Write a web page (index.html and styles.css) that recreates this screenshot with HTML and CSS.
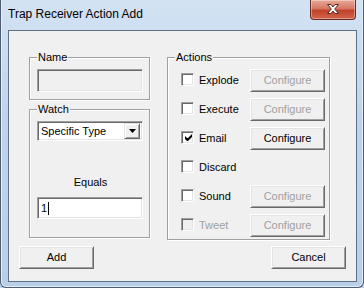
FILE: index.html
```html
<!doctype html>
<html lang="en">
	<head>
		<meta charset="UTF-8">
		<title>Trap Receiver Action Add</title>
		<link rel="stylesheet" href="styles.css">
	</head>
	<body>
		<div class="window">
			<div class="titlebar">
				<span class="title">Trap Receiver Action Add</span>
				<div class="close">
					<svg width="46" height="20" viewBox="0 0 46 20">
						<path d="M17.5 5.5h3.5l2 2.5 2-2.5h3.5l-3.8 4.5 3.8 4.5h-3.5l-2-2.5-2 2.5h-3.5l3.8-4.5z" fill="#fff" stroke="#5a2a22" stroke-width="1"/>
					</svg>
				</div>
			</div>
			<div class="client">
				<div class="panes">
					<div class="col-left">
						<div class="group group-name">
							<span class="legend">Name</span>
							<div class="field field-off"></div>
						</div>
						<div class="group group-watch">
							<span class="legend">Watch</span>
							<div class="select">
								<span class="select-text">Specific Type</span>
								<span class="drop">
									<svg width="7" height="4" viewBox="0 0 7 4"><path d="M0 0h7l-3.5 4z" fill="#000"/></svg>
								</span>
							</div>
							<div class="equals">Equals</div>
							<div class="field"><span>1</span><span class="caret"></span></div>
						</div>
					</div>
					<div class="group group-actions">
						<span class="legend">Actions</span>
						<div class="rows">
							<label class="row">
								<span class="check"></span><span class="lbl">Explode</span>
								<span class="btn btn-off">Configure</span>
							</label>
							<label class="row">
								<span class="check"></span><span class="lbl">Execute</span>
								<span class="btn btn-off">Configure</span>
							</label>
							<label class="row">
								<span class="check">
									<svg width="7" height="7" viewBox="0 0 7 7"><path d="M0 2v3l2 2h1l4-4v-3l-4 4h-1z" fill="#000"/></svg>
								</span><span class="lbl">Email</span>
								<span class="btn">Configure</span>
							</label>
							<label class="row">
								<span class="check"></span><span class="lbl">Discard</span>
							</label>
							<label class="row">
								<span class="check"></span><span class="lbl">Sound</span>
								<span class="btn btn-off">Configure</span>
							</label>
							<label class="row row-off">
								<span class="check"></span><span class="lbl">Tweet</span>
								<span class="btn btn-off">Configure</span>
							</label>
						</div>
					</div>
				</div>
				<div class="footer">
					<span class="btn">Add</span>
					<span class="btn">Cancel</span>
				</div>
			</div>
		</div>
	</body>
</html>
```

FILE: styles.css
```css
*{margin:0;padding:0;box-sizing:border-box;}
body{
	font-family:"Liberation Sans",Arial,sans-serif;
	font-size:11px;
	color:#000;
	background:#bcd2ea;
}
.window{
	width:364px;height:288px;
	display:flex;
	flex-direction:column;
	background:linear-gradient(#d3e3f4,#bfd4ec 40%,#b9cfe8);
	border:1px solid #4e5d70;
	border-top:0;
	border-radius:0 0 6px 6px;
	box-shadow:inset 1px 0 #e4eefa,inset -1px 0 #e4eefa,inset 0 -1px #e4eefa;
}
.titlebar{
	height:30px;
	display:flex;
	align-items:flex-start;
	padding-left:7px;
}
.title{
	font-size:12px;
	line-height:14px;
	margin-top:7px;
	color:#000;
}
.close{
	margin-left:auto;
	margin-right:7px;
	width:46px;height:20px;
	background:linear-gradient(#e9a99a,#d57763 45%,#c2422b 55%,#d0654b);
	border:1px solid #6a2c22;
	border-top:0;
	border-radius:0 0 4px 4px;
	box-shadow:inset 0 0 0 1px rgba(255,255,255,.35);
}
.close svg{display:block;margin:-1px 0 0 -1px;}
.client{
	margin:0 6px 0 7px;
	height:252px;
	background:#f0f0f0;
	border:1px solid #5f6f84;
}
.panes{
	display:flex;
	align-items:flex-start;
	gap:17px;
	padding:26px 0 0 20px;
}
.col-left{
	width:121px;
	display:flex;
	flex-direction:column;
	gap:9px;
}
.group{
	border:1px solid #a0a0a0;
	box-shadow:inset 1px 1px #fff,1px 1px #fff;
}
.legend{
	display:block;
	width:fit-content;
	margin:-7px 0 0 7px;
	padding:0 1px;
	line-height:13px;
	background:#f0f0f0;
}
.group-name{height:43px;}
.group-watch{height:129px;}
.group-actions{width:163px;height:183px;}
.field{
	width:106px;height:23px;
	margin:5px 0 0 7px;
	background:#fff;
	border:1px solid;
	border-color:#a0a0a0 #fff #fff #a0a0a0;
	box-shadow:inset 1px 1px #696969,inset -1px -1px #e3e3e3;
	display:flex;
	align-items:center;
	padding-left:3px;
	line-height:13px;
}
.field-off{background:#f0f0f0;}
.group-watch .field{height:22px;margin-top:8px;}
.caret{
	width:1px;height:13px;
	margin-left:1px;
	background:#000;
}
.select{
	width:106px;height:20px;
	margin:5px 0 0 7px;
	background:#fff;
	border:1px solid;
	border-color:#a0a0a0 #fff #fff #a0a0a0;
	box-shadow:inset 1px 1px #696969,inset -1px -1px #e3e3e3;
	display:flex;
	align-items:center;
	padding:2px 2px 2px 3px;
}
.select-text{flex:1;line-height:13px;}
.drop{
	width:16px;height:16px;
	background:#f0f0f0;
	border:1px solid;
	border-color:#e3e3e3 #696969 #696969 #e3e3e3;
	box-shadow:inset 1px 1px #fff,inset -1px -1px #a0a0a0;
	display:flex;
	align-items:center;
	justify-content:center;
}
.drop svg{display:block;}
.equals{
	margin-top:35px;
	line-height:13px;
	text-align:center;
	padding-left:2px;
}
.rows{
	display:flex;
	flex-direction:column;
	gap:6px;
	padding:5px 0 0 13px;
}
.row{
	height:23px;
	display:flex;
	align-items:center;
}
.check{
	width:13px;height:13px;
	background:#fff;
	border:1px solid;
	border-color:#a0a0a0 #fff #fff #a0a0a0;
	box-shadow:inset 1px 1px #696969,inset -1px -1px #e3e3e3;
	display:flex;
	align-items:center;
	justify-content:center;
	margin-top:-3px;
}
.check svg{display:block;margin:1px 0 0 1px;}
.lbl{
	width:56px;
	padding-left:5px;
	line-height:13px;
}
.row-off .check{background:#f0f0f0;}
.row-off .lbl{color:#a0a0a0;}
.btn{
	width:75px;height:23px;
	display:flex;
	align-items:center;
	justify-content:center;
	line-height:13px;
	background:#f0f0f0;
	border:1px solid;
	border-color:#fff #696969 #696969 #fff;
	box-shadow:inset 1px 1px #e3e3e3,inset -1px -1px #a0a0a0;
}
.btn-off{color:#a0a0a0;}
.footer{
	display:flex;
	justify-content:space-between;
	margin-top:6px;
	padding:0 10px;
}
```
